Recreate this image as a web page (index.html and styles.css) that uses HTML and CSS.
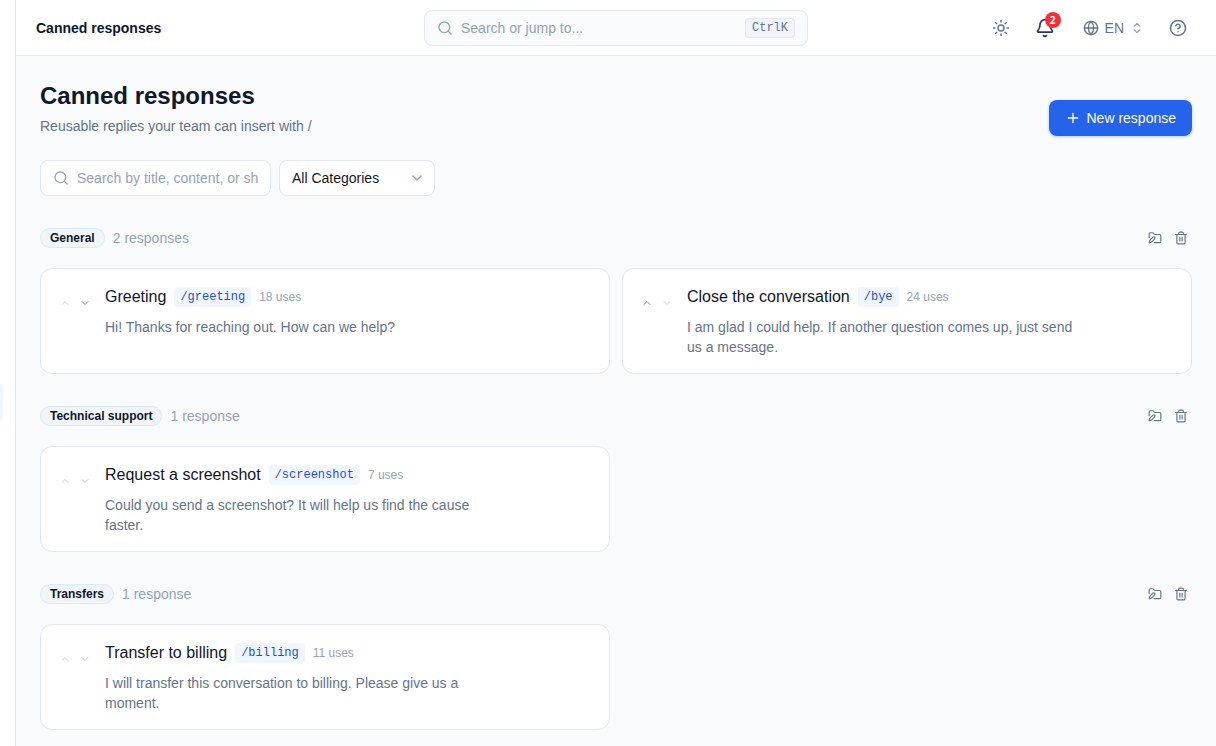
FILE: index.html
```html
<!DOCTYPE html>
<html lang="en">
<head>
    <meta charset="UTF-8">
    <meta name="viewport" content="width=device-width, initial-scale=1.0">
    <title>Canned responses</title>
    <link rel="stylesheet" href="styles.css">
</head>
<body>

    <!-- Shared icons -->
    <svg class="sprite" aria-hidden="true">
        <symbol id="search" viewBox="0 0 24 24"><circle cx="11" cy="11" r="8"/><path d="m21 21-4.3-4.3"/></symbol>
        <symbol id="up" viewBox="0 0 24 24"><path d="m18 15-6-6-6 6"/></symbol>
        <symbol id="down" viewBox="0 0 24 24"><path d="m6 9 6 6 6-6"/></symbol>
        <symbol id="folder-pen" viewBox="0 0 24 24"><path d="M2 11.5V5a2 2 0 0 1 2-2h3.9c.7 0 1.3.3 1.7.9l.8 1.2c.4.6 1 .9 1.7.9H20a2 2 0 0 1 2 2v10a2 2 0 0 1-2 2h-9.5"/><path d="M11.378 13.626a1 1 0 1 0-3.004-3.004l-5.01 5.012a2 2 0 0 0-.506.854l-.837 2.87a.5.5 0 0 0 .62.62l2.87-.837a2 2 0 0 0 .854-.506z"/></symbol>
        <symbol id="trash" viewBox="0 0 24 24"><path d="M3 6h18"/><path d="M19 6v14a2 2 0 0 1-2 2H7a2 2 0 0 1-2-2V6"/><path d="M8 6V4a2 2 0 0 1 2-2h4a2 2 0 0 1 2 2v2"/><path d="M10 11v6"/><path d="M14 11v6"/></symbol>
    </svg>

    <div class="app">
        <aside class="sidebar">
            <a class="sidebar-active" href="#" aria-current="page"></a>
        </aside>

        <div class="content">
            <header class="topbar">
                <div class="topbar-title">Canned responses</div>

                <label class="jump">
                    <svg class="icon icon-16"><use href="#search"/></svg>
                    <input type="text" placeholder="Search or jump to..." aria-label="Search or jump to">
                    <kbd>CtrlK</kbd>
                </label>

                <div class="topbar-actions">
                    <button class="icon-button" aria-label="Theme">
                        <svg class="icon icon-18" viewBox="0 0 24 24"><circle cx="12" cy="12" r="4"/><path d="M12 2v2"/><path d="M12 20v2"/><path d="m4.93 4.93 1.41 1.41"/><path d="m17.66 17.66 1.41 1.41"/><path d="M2 12h2"/><path d="M20 12h2"/><path d="m6.34 17.66-1.41 1.41"/><path d="m19.07 4.93-1.41 1.41"/></svg>
                    </button>
                    <button class="icon-button bell" aria-label="Notifications">
                        <svg class="icon icon-20" viewBox="0 0 24 24"><path d="M10.268 21a2 2 0 0 0 3.464 0"/><path d="M3.262 15.326A1 1 0 0 0 4 17h16a1 1 0 0 0 .74-1.673C19.41 13.956 18 12.499 18 8A6 6 0 0 0 6 8c0 4.499-1.411 5.956-2.738 7.326"/></svg>
                        <span class="badge">2</span>
                    </button>
                    <button class="language">
                        <svg class="icon icon-16" viewBox="0 0 24 24"><circle cx="12" cy="12" r="10"/><path d="M12 2a14.5 14.5 0 0 0 0 20 14.5 14.5 0 0 0 0-20"/><path d="M2 12h20"/></svg>
                        EN
                        <svg class="icon icon-14 language-arrows" viewBox="0 0 24 24"><path d="m7 15 5 5 5-5"/><path d="m7 9 5-5 5 5"/></svg>
                    </button>
                    <button class="icon-button" aria-label="Help">
                        <svg class="icon icon-18" viewBox="0 0 24 24"><circle cx="12" cy="12" r="10"/><path d="M9.09 9a3 3 0 0 1 5.83 1c0 2-3 3-3 3"/><path d="M12 17h.01"/></svg>
                    </button>
                </div>
            </header>

            <main>
                <div class="page-header">
                    <div>
                        <h1>Canned responses</h1>
                        <p>Reusable replies your team can insert with /</p>
                    </div>
                    <button class="primary">
                        <svg class="icon icon-16" viewBox="0 0 24 24"><path d="M5 12h14"/><path d="M12 5v14"/></svg>
                        New response
                    </button>
                </div>

                <div class="filters">
                    <label class="filter-search">
                        <svg class="icon icon-16"><use href="#search"/></svg>
                        <input type="text" placeholder="Search by title, content, or shortcut" aria-label="Search responses">
                    </label>
                    <div class="filter-select">
                        <select aria-label="Category">
                            <option>All Categories</option>
                            <option>General</option>
                            <option>Technical support</option>
                            <option>Transfers</option>
                        </select>
                        <svg class="icon icon-16"><use href="#down"/></svg>
                    </div>
                </div>

                <section class="group">
                    <div class="group-header">
                        <h2>General</h2>
                        <span class="count">2 responses</span>
                        <div class="group-actions">
                            <button aria-label="Rename category"><svg class="icon icon-14"><use href="#folder-pen"/></svg></button>
                            <button aria-label="Delete category"><svg class="icon icon-14"><use href="#trash"/></svg></button>
                        </div>
                    </div>
                    <div class="cards">
                        <article class="card">
                            <div class="order">
                                <button aria-label="Move up" disabled><svg class="icon icon-12"><use href="#up"/></svg></button>
                                <button aria-label="Move down"><svg class="icon icon-12"><use href="#down"/></svg></button>
                            </div>
                            <div class="card-body">
                                <div class="card-title">
                                    <h3>Greeting</h3>
                                    <code>/greeting</code>
                                    <span class="uses">18 uses</span>
                                </div>
                                <p>Hi! Thanks for reaching out. How can we help?</p>
                            </div>
                        </article>
                        <article class="card">
                            <div class="order">
                                <button aria-label="Move up"><svg class="icon icon-12"><use href="#up"/></svg></button>
                                <button aria-label="Move down" disabled><svg class="icon icon-12"><use href="#down"/></svg></button>
                            </div>
                            <div class="card-body">
                                <div class="card-title">
                                    <h3>Close the conversation</h3>
                                    <code>/bye</code>
                                    <span class="uses">24 uses</span>
                                </div>
                                <p>I am glad I could help. If another question comes up, just send us a message.</p>
                            </div>
                        </article>
                    </div>
                </section>

                <section class="group">
                    <div class="group-header">
                        <h2>Technical support</h2>
                        <span class="count">1 response</span>
                        <div class="group-actions">
                            <button aria-label="Rename category"><svg class="icon icon-14"><use href="#folder-pen"/></svg></button>
                            <button aria-label="Delete category"><svg class="icon icon-14"><use href="#trash"/></svg></button>
                        </div>
                    </div>
                    <div class="cards">
                        <article class="card">
                            <div class="order">
                                <button aria-label="Move up" disabled><svg class="icon icon-12"><use href="#up"/></svg></button>
                                <button aria-label="Move down" disabled><svg class="icon icon-12"><use href="#down"/></svg></button>
                            </div>
                            <div class="card-body">
                                <div class="card-title">
                                    <h3>Request a screenshot</h3>
                                    <code>/screenshot</code>
                                    <span class="uses">7 uses</span>
                                </div>
                                <p>Could you send a screenshot? It will help us find the cause faster.</p>
                            </div>
                        </article>
                    </div>
                </section>

                <section class="group">
                    <div class="group-header">
                        <h2>Transfers</h2>
                        <span class="count">1 response</span>
                        <div class="group-actions">
                            <button aria-label="Rename category"><svg class="icon icon-14"><use href="#folder-pen"/></svg></button>
                            <button aria-label="Delete category"><svg class="icon icon-14"><use href="#trash"/></svg></button>
                        </div>
                    </div>
                    <div class="cards">
                        <article class="card">
                            <div class="order">
                                <button aria-label="Move up" disabled><svg class="icon icon-12"><use href="#up"/></svg></button>
                                <button aria-label="Move down" disabled><svg class="icon icon-12"><use href="#down"/></svg></button>
                            </div>
                            <div class="card-body">
                                <div class="card-title">
                                    <h3>Transfer to billing</h3>
                                    <code>/billing</code>
                                    <span class="uses">11 uses</span>
                                </div>
                                <p>I will transfer this conversation to billing. Please give us a moment.</p>
                            </div>
                        </article>
                    </div>
                </section>
            </main>
        </div>
    </div>

</body>
</html>
```

FILE: styles.css
```css
* {
    box-sizing: border-box;
}
body {
    margin: 0;
    font-family: "Liberation Sans", Arial, sans-serif;
    font-size: 14px;
    line-height: 20px;
    color: #0f172a;
    background-color: #f8fafc;
}
h1, h2, h3, p {
    margin: 0;
}
button, input, select {
    font: inherit;
    color: inherit;
}
button {
    display: flex;
    align-items: center;
    justify-content: center;
    padding: 0;
    border: none;
    background: none;
    cursor: pointer;
}
.sprite {
    display: none;
}
.icon {
    flex-shrink: 0;
    fill: none;
    stroke: currentColor;
    stroke-width: 2;
    stroke-linecap: round;
    stroke-linejoin: round;
}
.icon-12 { width: 12px; height: 12px; }
.icon-14 { width: 14px; height: 14px; }
.icon-16 { width: 16px; height: 16px; }
.icon-18 { width: 18px; height: 18px; }
.icon-20 { width: 20px; height: 20px; }

/* Layout */
.app {
    display: flex;
    min-height: 100vh;
}
.sidebar {
    flex: 0 0 16px;
    display: flex;
    align-items: center;
    padding-top: 58px;
    background-color: #fff;
    border-right: 1px solid #e2e8f0;
}
.sidebar-active {
    width: 3px;
    height: 36px;
    border-radius: 0 8px 8px 0;
    background-color: #eff6ff;
}
.content {
    flex: 1;
    min-width: 0;
}

/* Top bar */
.topbar {
    display: grid;
    grid-template-columns: 1fr minmax(0, 384px) 1fr;
    align-items: center;
    height: 56px;
    padding: 0 20px;
    background-color: #fff;
    border-bottom: 1px solid #e2e8f0;
}
.topbar-title {
    font-weight: bold;
}
.jump, .filter-search {
    display: flex;
    align-items: center;
    gap: 8px;
    height: 36px;
    padding: 0 12px;
    border: 1px solid #e2e8f0;
    border-radius: 8px;
    color: #94a3b8;
}
.jump {
    background-color: #f8fafc;
}
.jump input, .filter-search input {
    flex: 1;
    min-width: 0;
    padding: 0;
    border: none;
    outline: none;
    background: none;
    color: #0f172a;
}
input::placeholder {
    color: #94a3b8;
    opacity: 1;
}
kbd {
    padding: 0 6px;
    border: 1px solid #e2e8f0;
    border-radius: 4px;
    background-color: #f1f5f9;
    color: #64748b;
    font-family: "Liberation Mono", monospace;
    font-size: 12px;
    line-height: 18px;
}
.topbar-actions {
    display: flex;
    justify-content: flex-end;
    gap: 8px;
    color: #64748b;
}
.icon-button {
    width: 36px;
    height: 36px;
}
.bell {
    position: relative;
    color: #1e3a6e;
}
.badge {
    position: absolute;
    top: 2px;
    right: 2px;
    width: 16px;
    height: 16px;
    border-radius: 50%;
    background-color: #fb2c36;
    color: #fff;
    font-family: "Noto Sans", sans-serif;
    font-size: 10px;
    font-weight: bold;
    line-height: 16px;
}
.language {
    gap: 6px;
    padding: 0 8px 0 12px;
}
.language-arrows {
    color: #94a3b8;
}

/* Page */
main {
    padding: 24px 24px 16px;
}
.page-header {
    display: flex;
    justify-content: space-between;
    align-items: flex-end;
    margin-bottom: 24px;
}
h1 {
    margin-bottom: 4px;
    font-size: 24px;
    line-height: 32px;
}
.page-header p {
    color: #64748b;
}
.primary {
    gap: 6px;
    height: 36px;
    padding: 0 16px;
    border-radius: 8px;
    background-color: #2563eb;
    color: #fff;
    box-shadow: 0 1px 3px rgba(37, 99, 235, 0.3);
}
.filters {
    display: flex;
    gap: 8px;
}
.filter-search {
    width: 231px;
    background-color: #fff;
}
.filter-select {
    position: relative;
    width: 156px;
}
.filter-select select {
    width: 100%;
    height: 36px;
    padding: 0 32px 0 12px;
    border: 1px solid #e2e8f0;
    border-radius: 8px;
    background-color: #fff;
    appearance: none;
}
.filter-select .icon {
    position: absolute;
    top: 10px;
    right: 10px;
    color: #94a3b8;
    pointer-events: none;
}

/* Groups */
.group {
    margin-top: 32px;
}
.group-header {
    display: flex;
    align-items: center;
    gap: 8px;
    height: 20px;
    margin-bottom: 20px;
}
h2 {
    padding: 0 9px;
    border: 1px solid #d6eafc;
    border-radius: 10px;
    background-color: #f1f5f9;
    font-size: 12px;
    line-height: 18px;
}
.count {
    color: #94a3b8;
}
.group-actions {
    display: flex;
    gap: 4px;
    margin-left: auto;
    color: #64748b;
}
.group-actions button {
    width: 22px;
    height: 22px;
}
.cards {
    display: grid;
    grid-template-columns: 1fr 1fr;
    gap: 12px;
}
.card {
    display: flex;
    gap: 12px;
    min-height: 106px;
    padding: 16px;
    border: 1px solid #e2e8f0;
    border-radius: 12px;
    background-color: #fff;
}
.order {
    display: flex;
    align-items: flex-start;
    gap: 4px;
    padding-top: 10px;
}
.order button {
    width: 16px;
    height: 16px;
    color: #7c8799;
}
.order button:disabled {
    opacity: 0.4;
    cursor: default;
}
.card-body {
    max-width: 390px;
}
.card-title {
    display: flex;
    align-items: center;
    gap: 8px;
    margin-bottom: 8px;
}
h3 {
    font-size: 16px;
    font-weight: normal;
    line-height: 24px;
}
code {
    padding: 0 6px;
    border-radius: 4px;
    background-color: #eff6ff;
    color: #1d4ed8;
    font-family: "Liberation Mono", monospace;
    font-size: 12px;
    line-height: 20px;
}
.uses {
    color: #94a3b8;
    font-size: 12px;
}
.card p {
    color: #64748b;
}
```
